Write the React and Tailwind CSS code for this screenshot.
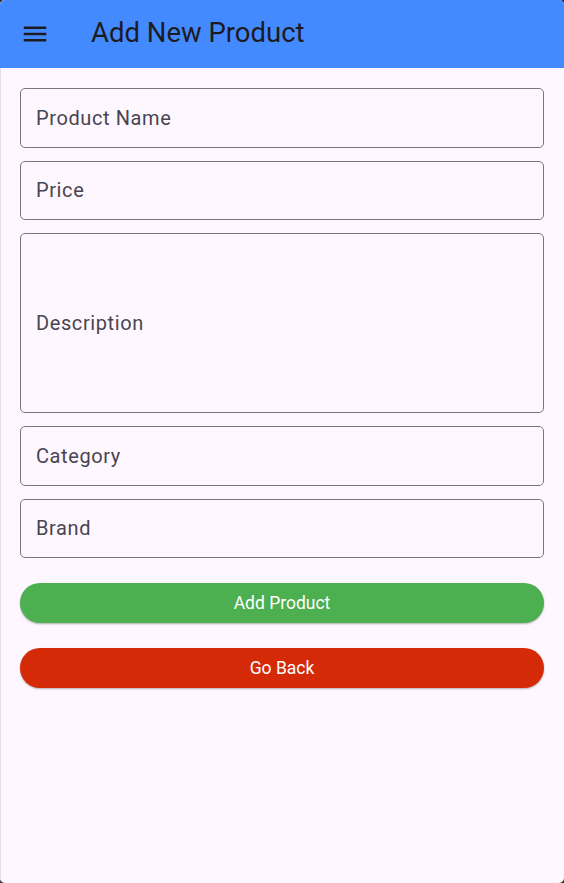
import React from "react";

const fields = [
  { label: "Product Name", h: "h-[59.5px]" },
  { label: "Price", h: "h-[59.5px]" },
  { label: "Description", h: "h-[180px]" },
  { label: "Category", h: "h-[59.5px]" },
  { label: "Brand", h: "h-[59.5px]" },
];

export default function App() {
  return (
    <div className="w-[564px] h-[883px] bg-[#2f2f2f]" style={{ fontFamily: "Roboto, 'Noto Sans', sans-serif" }}>
      <div className="w-full h-full rounded-[5px] overflow-hidden bg-[#fef7ff] flex flex-col shadow-[inset_1px_0_0_#e4e0e6]">
        <header className="h-[68px] bg-[#448aff] flex items-center shrink-0">
          <div className="w-[30px] h-[30px] ml-[20px] text-[#1d1b20]">
            <svg viewBox="0 0 24 24" width="30" height="30" fill="currentColor">
              <path d="M3 18h18v-2H3v2zm0-5h18v-2H3v2zm0-7v2h18V6H3z" />
            </svg>
          </div>
          <h1 className="ml-[41px] text-[27.5px] leading-[34px] text-[#1d1b20] font-normal mt-[-2px]">
            Add New Product
          </h1>
        </header>
        <main className="px-[20px] pt-[20px] flex flex-col">
          <div className="flex flex-col gap-[13px]">
            {fields.map((f) => (
              <div
                key={f.label}
                className={`${f.h} rounded-[5px] border border-[#79747e] flex items-center pl-[15px]`}
              >
                <span className="text-[20px] tracking-[0.6px] text-[#49454f]">{f.label}</span>
              </div>
            ))}
          </div>
          <button className="mt-[25px] h-[40px] rounded-full bg-[#4caf50] text-white text-[17.5px] font-normal shadow-[0_1px_2px_rgba(0,0,0,0.3)]">
            Add Product
          </button>
          <button className="mt-[25px] h-[40px] rounded-full bg-[#d52a08] text-white text-[17.5px] font-normal shadow-[0_1px_2px_rgba(0,0,0,0.3)]">
            Go Back
          </button>
        </main>
      </div>
    </div>
  );
}
